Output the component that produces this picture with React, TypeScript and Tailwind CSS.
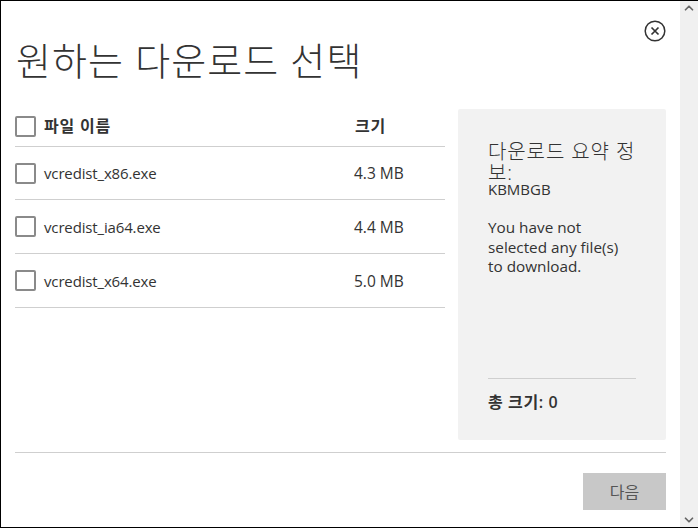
import { ChevronDown, ChevronUp } from "lucide-react";

const font = "font-['Open_Sans','Noto_Sans_CJK_KR',sans-serif]";

const files = [
  { name: "vcredist_x86.exe", size: "4.3 MB" },
  { name: "vcredist_ia64.exe", size: "4.4 MB" },
  { name: "vcredist_x64.exe", size: "5.0 MB" },
];

function Checkbox() {
  return <span className="h-[21px] w-[21px] shrink-0 rounded-[2px] border-2 border-[#8a8a8a] bg-white" />;
}

export default function App() {
  return (
    <div className={`${font} flex h-[528px] w-[698px] overflow-hidden border-t border-b border-l border-black bg-white text-[#333]`}>
      <main className="flex w-[679px] flex-col px-[14px]">
        <div className="flex justify-end pt-[19px]">
          <svg width="22" height="22" viewBox="0 0 22 22" fill="none" stroke="#333" className="shrink-0">
            <circle cx="11" cy="11" r="9.8" strokeWidth="1.5" />
            <path d="M7.5 7.5l7 7M14.5 7.5l-7 7" strokeWidth="1.7" />
          </svg>
        </div>
        <h1 className="mt-[-4px] h-[71px] pl-[1px] text-[38px] leading-[44px] font-light whitespace-nowrap tracking-[1.1px] text-[#333]">
          원하는 다운로드 선택
        </h1>
        <div className="flex h-[331px] gap-[13px]">
          <section className="w-[430px]">
            <div className="flex h-[38px] items-start border-b border-[#cfcfcf] pt-[7px]">
              <Checkbox />
              <span className="ml-[8px] w-[311px] text-[16px] leading-[20px] font-semibold tracking-[0.8px]">파일 이름</span>
              <span className="text-[16px] leading-[20px] font-semibold tracking-[0.7px]">크기</span>
            </div>
            {files.map((file, index) => (
              <div key={file.name} className={`flex items-center border-b border-[#cfcfcf] ${index === 0 ? "h-[53px]" : "h-[54px]"}`}>
                <Checkbox />
                <span className="ml-[8px] w-[310px] text-[15px] leading-[20px] tracking-[-0.15px]">{file.name}</span>
                <span className="text-[15.5px] leading-[20px]">{file.size}</span>
              </div>
            ))}
          </section>
          <aside className="flex w-[208px] flex-col rounded-[2px] bg-[#f2f2f2] pt-[32px] pr-[30px] pb-[28px] pl-[30px]">
            <h2 className="text-[20px] leading-[21px] font-light tracking-[0.9px]">다운로드 요약 정보:</h2>
            <p className="text-[15px] leading-[12px]">KBMBGB</p>
            <p className="mt-[23px] text-[15.3px] leading-[19.5px]">
              You have not
              <br />
              selected any file(s)
              <br />
              to download.
            </p>
            <div className="mt-auto border-t border-[#cfcfcf] pt-[13px] text-[16px] leading-[20px] font-semibold tracking-[0.6px]">
              총 크기: 0
            </div>
          </aside>
        </div>
        <div className="mt-[12px] flex justify-end border-t border-[#cfcfcf] pt-[20px]">
          <button type="button" className="h-[37px] w-[83px] bg-[#c8c8c8] text-[16px] text-[#555]">
            다음
          </button>
        </div>
      </main>
      <div className="flex w-[18px] flex-col items-center justify-between bg-[#f0f0f0] text-[#666]">
        <ChevronUp size={14} strokeWidth={3} />
        <ChevronDown size={14} strokeWidth={3} />
      </div>
    </div>
  );
}
